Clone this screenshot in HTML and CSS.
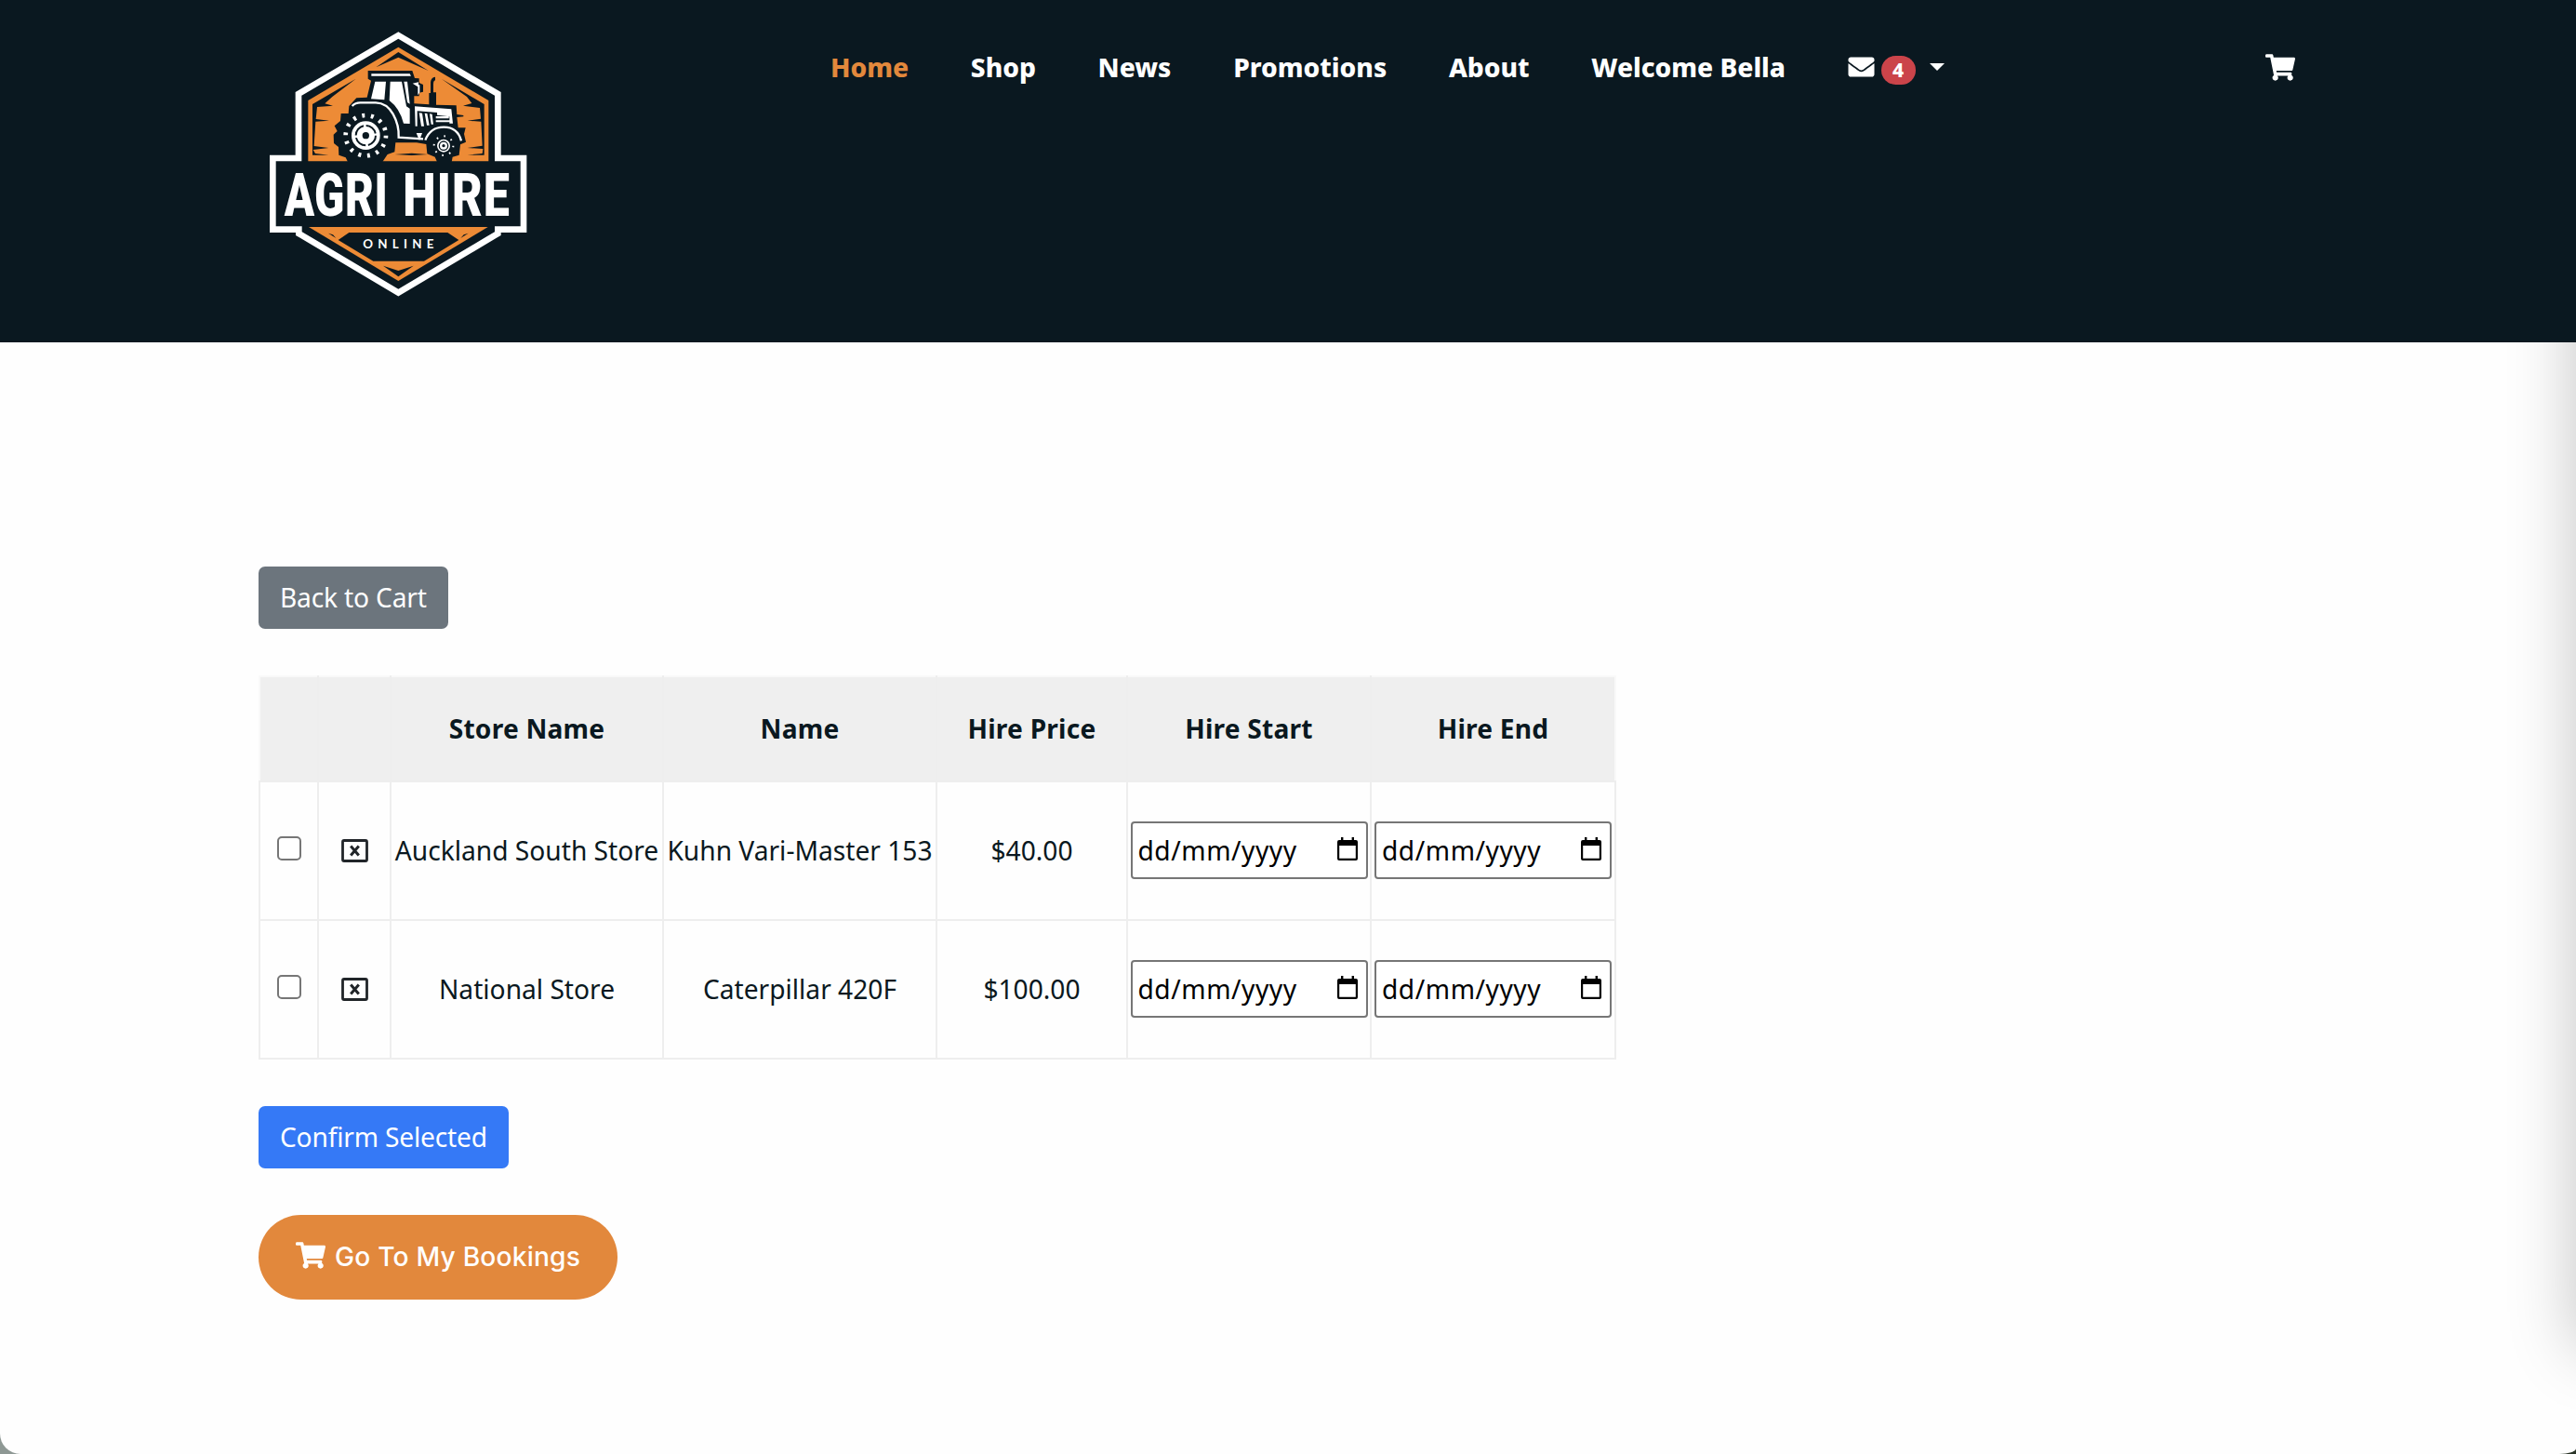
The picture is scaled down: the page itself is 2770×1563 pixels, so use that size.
FILE: index.html
```html
<!DOCTYPE html>
<html lang="en">
<head>
<meta charset="utf-8">
<title>Agri Hire Online</title>
<link rel="stylesheet" href="styles.css">
</head>
<body>
<svg class="defs" width="0" height="0" aria-hidden="true">
  <symbol id="cart" viewBox="0 0 576 512"><path d="M528.12 301.319l47.273-208C578.806 78.301 567.391 64 551.99 64H159.208l-9.166-44.81C147.758 8.021 137.93 0 126.529 0H24C10.745 0 0 10.745 0 24v16c0 13.255 10.745 24 24 24h69.883l70.248 343.435C147.325 417.1 136 435.222 136 456c0 30.928 25.072 56 56 56s56-25.072 56-56c0-15.674-6.447-29.835-16.824-40h209.647C430.447 426.165 424 440.326 424 456c0 30.928 25.072 56 56 56s56-25.072 56-56c0-22.172-12.888-41.332-31.579-50.405l5.517-24.276c3.413-15.018-8.002-29.319-23.403-29.319H218.117l-6.545-32h293.145c11.206 0 20.92-7.754 23.403-18.681z"/></symbol>
  <symbol id="remove" viewBox="0 0 29 25"><rect x="1.5" y="1.5" width="26" height="22" rx="1.5" fill="none" stroke="#212529" stroke-width="2.8"/><path d="M10.2 7.6l8.6 9.8M18.8 7.6l-8.6 9.8" fill="none" stroke="#212529" stroke-width="3"/></symbol>
  <symbol id="calendar" viewBox="0 0 22 25"><path d="M4 0h2.4v3h9.2V0H18v3h2a2 2 0 0 1 2 2v18a2 2 0 0 1-2 2H2a2 2 0 0 1-2-2V5a2 2 0 0 1 2-2h2zM2.2 9v13.8h17.6V9z" fill-rule="evenodd"/></symbol>
</svg>
<div class="page">
  <header class="header">
    <a class="logo" href="#">
      <svg width="320" height="310" viewBox="0 0 960 930" role="img" aria-label="Agri Hire Online">
        <path class="frame" d="M475 54L796 243V450H879V680H796V693L475 884L154 693V680H70V450H153V243Z"/>
        <path class="orange" d="M475 92L766 264V460H184V264Z"/>
        <path class="dark" d="M475 108L572 168L475 125L403 157ZM338 194L198 276V440H250L207 435L200 423L250 417L203 411L208 332L252 329L209 324L213 285L264 281L238 274L262 252ZM614 194L752 276V440H698L746 435L748 420L698 417L746 410L742 332L698 329L741 323L738 288L684 281L712 273L696 252ZM464 438L518 434L570 438L518 441Z"/>
        <!-- tractor body -->
        <path class="dark" d="M377 168H520L528 192L542 193V207L555 213V236L542 239V250H526V274L574 277V240H579V205Q580 190 594 188V199Q588 200 588 212V238H597V278L662 280L664 309L685 312V316L664 318L668 352H692L687 372L693 398L675 406L671 440L650 446L647 462H600L593 446L568 436L565 405L534 400H466L463 430L440 438L424 462H312L305 448L283 440L282 414L267 402L266 374L278 363L269 346L288 330L290 306L314 306L316 282L340 256L374 254L387 200L377 194Z"/>
        <path class="white" d="M388 178H512L516 185H388ZM400 203H435L430 262L387 259ZM449 203H486L501 283L512 290V339L492 338Q480 290 446 264ZM493 203H504L512 275L504 270ZM521 209L540 205V214H544V238L538 247V220ZM528 283L646 292L651 338H640V316L600 311V303L536 298V347H530ZM542 304L552 305L558 347H549ZM560 305L568 306L575 344H567ZM576 307L584 308L588 341H581ZM596 315H638V322H596ZM596 328H642V334H596ZM533 369H552L543 393Z"/>
        <path class="line" d="M326 282Q336 271 352 271H402Q438 272 458 308T476 383L555 388M562 392Q578 350 622 350T678 394"/>
        <circle class="teeth" cx="370" cy="377" r="65"/>
        <circle class="white" cx="370" cy="377" r="46"/>
        <circle class="ring" cx="370" cy="377" r="32"/>
        <circle class="white" cx="370" cy="377" r="22"/>
        <circle class="dark" cx="370" cy="377" r="11"/>
        <circle class="teeth small" cx="621" cy="410" r="31"/>
        <circle class="white" cx="621" cy="410" r="21"/>
        <circle class="ring thin" cx="621" cy="410" r="14"/>
        <circle class="dark" cx="621" cy="410" r="5"/>
        <text class="brand" transform="translate(107 635) scale(.735 1)" textLength="454">AGRI</text>
        <text class="brand" transform="translate(490 635) scale(.777 1)" textLength="442">HIRE</text>
        <path class="orange" d="M186 672H764L475 846Z"/>
        <path class="dark" d="M316 690H634L670 714L558 782H394L281 714ZM426 797L475 813L524 797L475 832ZM249 692L264 697L274 708ZM701 692L686 697L676 708Z"/>
        <text class="online" x="361" y="741" textLength="228">ONLINE</text>
      </svg>
    </a>
    <nav class="nav">
      <a class="active" href="#">Home</a>
      <a href="#">Shop</a>
      <a href="#">News</a>
      <a href="#">Promotions</a>
      <a href="#">About</a>
      <a href="#">Welcome Bella</a>
      <a class="inbox" href="#">
        <svg width="29" height="28" viewBox="0 0 512 512"><path d="M502.3 190.8c3.9-3.1 9.7-.2 9.7 4.7V400c0 26.5-21.5 48-48 48H48c-26.5 0-48-21.5-48-48V195.6c0-5 5.7-7.8 9.7-4.7 22.4 17.4 52.1 39.5 154.1 113.6 21.1 15.4 56.7 47.8 92.2 47.6 35.7.3 72-32.8 92.3-47.6 102-74.1 131.6-96.3 154-113.7zM256 320c23.2.4 56.6-29.2 73.4-41.4 132.7-96.3 142.8-104.7 173.4-128.7 5.8-4.5 9.2-11.5 9.2-18.9v-19c0-26.5-21.5-48-48-48H48c-26.5 0-48 21.5-48 48v19c0 7.4 3.4 14.3 9.2 18.9 30.6 23.9 40.7 32.4 173.4 128.7 16.8 12.2 50.2 41.8 73.4 41.4z"/></svg>
        <span class="badge">4</span>
        <span class="caret"></span>
      </a>
    </nav>
    <a class="cart-link" href="#"><svg width="32" height="29"><use href="#cart"/></svg></a>
  </header>

  <main class="main">
    <a class="btn btn-grey" href="#">Back to Cart</a>
    <table class="items">
      <colgroup><col class="c-check"><col class="c-remove"><col class="c-store"><col class="c-name"><col class="c-price"><col class="c-start"><col class="c-end"></colgroup>
      <thead>
        <tr><th></th><th></th><th>Store Name</th><th>Name</th><th>Hire Price</th><th>Hire Start</th><th>Hire End</th></tr>
      </thead>
      <tbody>
        <tr>
          <td><input class="check" type="checkbox"></td>
          <td><svg class="remove" width="29" height="25"><use href="#remove"/></svg></td>
          <td>Auckland South Store</td><td>Kuhn Vari-Master 153</td><td>$40.00</td>
          <td><div class="date"><span>dd/mm/yyyy</span><svg width="22" height="25"><use href="#calendar"/></svg></div></td>
          <td><div class="date"><span>dd/mm/yyyy</span><svg width="22" height="25"><use href="#calendar"/></svg></div></td>
        </tr>
        <tr>
          <td><input class="check" type="checkbox"></td>
          <td><svg class="remove" width="29" height="25"><use href="#remove"/></svg></td>
          <td>National Store</td><td>Caterpillar 420F</td><td>$100.00</td>
          <td><div class="date"><span>dd/mm/yyyy</span><svg width="22" height="25"><use href="#calendar"/></svg></div></td>
          <td><div class="date"><span>dd/mm/yyyy</span><svg width="22" height="25"><use href="#calendar"/></svg></div></td>
        </tr>
      </tbody>
    </table>
    <a class="btn btn-blue" href="#">Confirm Selected</a>
    <a class="btn-bookings" href="#"><svg width="32" height="29"><use href="#cart"/></svg><span>Go To My Bookings</span></a>
  </main>
  <aside class="drawer"></aside>
</div>
</body>
</html>
```
FILE: styles.css
```css
* { box-sizing: border-box; }
html { background: linear-gradient(90deg, #8e9894 50%, #2a3528 50%); }
body {
  margin: 0;
  font: 28.16px/42px "Noto Sans", sans-serif;
  color: #0a1820;
}
a { color: inherit; text-decoration: none; }
.defs { display: block; position: absolute; }
.page {
  position: relative;
  height: 1563px;
  overflow: hidden;
  background: #fefefe;
  border-bottom-left-radius: 22px;
  border-bottom-right-radius: 18px 6px;
}

.header {
  display: flex;
  align-items: flex-start;
  height: 368px;
  padding: 20px 302px 0 270px;
  background: #0a1820;
  color: #fff;
}
.logo { display: block; width: 320px; height: 310px; }
.logo svg { display: block; }
.frame { fill: #0a1820; stroke: #fff; stroke-width: 20; }
.orange { fill: #ed8b36; }
.dark { fill: #0a1820; }
.white { fill: #fff; }
.line { fill: none; stroke: #fff; stroke-width: 7; }
.teeth { fill: none; stroke: #fff; stroke-width: 14; stroke-dasharray: 9 20.2; }
.teeth.small { stroke-width: 6; stroke-dasharray: 5 19.35; }
.ring { fill: none; stroke: #0a1820; stroke-width: 6; stroke-dasharray: 42 8.3; }
.ring.thin { stroke-width: 4; stroke-dasharray: none; }
.brand { font: 900 194px Roboto, sans-serif; fill: #fff; }
.online { font: bold 40px Lato, sans-serif; fill: #fff; }

.nav {
  display: flex;
  gap: 66.7px;
  margin-left: 303px;
  padding-top: 31px;
  font-weight: 800;
  white-space: nowrap;
}
.active { color: #e2883c; }
.inbox { display: flex; align-items: center; height: 42px; }
.inbox svg { fill: #fff; }
.badge {
  width: 37px;
  height: 31px;
  margin: 7px 15px 0 7px;
  border-radius: 16px;
  background: #cb444a;
  font-size: 21px;
  line-height: 31px;
  text-align: center;
}
.caret { border: 8px solid transparent; border-top-color: #fff; border-bottom: 0; }
.cart-link { margin-left: auto; padding-top: 38px; }
.cart-link svg { display: block; fill: #fff; }

.main {
  display: flex;
  flex-direction: column;
  align-items: flex-start;
  padding: 241px 278px 0;
}
.btn {
  height: 67px;
  padding: 0 23px;
  border-radius: 7px;
  color: #fff;
  line-height: 67px;
  letter-spacing: -.18px;
}
.btn-grey { background: #6c757d; }
.btn-blue { background: #3579f6; }
.items {
  width: 1459px;
  margin: 50px 0;
  border-collapse: collapse;
  table-layout: fixed;
  text-align: center;
  white-space: nowrap;
}
.items th, .items td { padding: 0 0 2px; border: 2px solid #eee; }
.items th {
  height: 113px;
  background: #efefef;
  border-top-color: #f9f9f9;
  letter-spacing: .2px;
}
.items th:first-child { border-left-color: #f9f9f9; }
.items th:last-child { border-right-color: #f9f9f9; }
.items td { height: 149px; }
.c-check { width: 63px; }
.c-remove { width: 78px; }
.c-store { width: 293px; }
.c-name { width: 294px; }
.c-price { width: 205px; }
.c-start { width: 262px; }
.c-end { width: 263px; }
.check {
  appearance: none;
  display: block;
  width: 26px;
  height: 26px;
  margin: -3px auto 0;
  border: 2px solid #767676;
  border-radius: 5px;
  background: #fff;
}
.remove { display: block; margin: 2px auto 0; }
.date {
  display: flex;
  align-items: center;
  justify-content: space-between;
  width: 255px;
  height: 62px;
  margin: 0 auto;
  padding: 0 9px 0 6px;
  border: 2px solid #767676;
  border-radius: 4px;
  background: #fff;
  color: #000;
  letter-spacing: .55px;
}
.date svg { margin-top: -3px; }
.btn-bookings {
  display: flex;
  align-items: center;
  gap: 10px;
  width: 386px;
  height: 91px;
  margin-top: 50px;
  padding: 0 0 2px 40px;
  border-radius: 46px;
  background: #e2883c;
  color: #fff;
  font: 500 28.16px Inter, sans-serif;
  letter-spacing: .2px;
  white-space: nowrap;
}
.btn-bookings svg { fill: #fff; margin-top: -2px; }
.drawer {
  position: absolute;
  top: -60px;
  left: 100%;
  width: 400px;
  height: 1510px;
  box-shadow: 0 0 68px rgba(0, 0, 0, .23);
}
.header { position: relative; z-index: 1; }
```
